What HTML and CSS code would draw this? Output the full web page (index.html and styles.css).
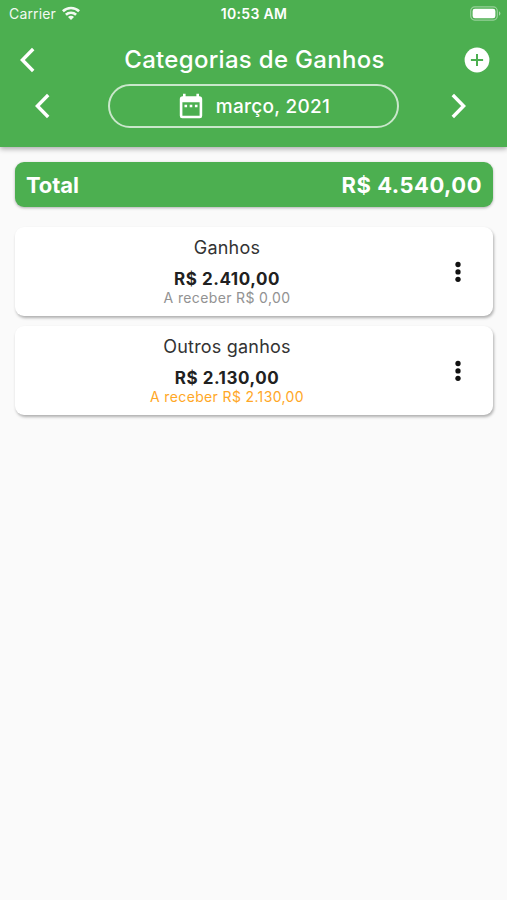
FILE: index.html
```html
<!DOCTYPE html>
<html lang="pt-BR">
<head>
<meta charset="utf-8">
<title>Categorias de Ganhos</title>
<link rel="stylesheet" href="styles.css">
</head>
<body>
<header class="header">
  <div class="status">
    <div class="carrier"><span>Carrier</span>
      <svg class="wifi" viewBox="0 0 18 14" width="18" height="14"><g fill="none" stroke="#fff" stroke-width="2.6"><path d="M.9 5.300a11.700 11.700 0 0 1 16.200 0"/><path d="M3.900 8.800a7.300 7.300 0 0 1 10.200 0"/></g><path d="M9 13.900 6 10.900a4.200 4.200 0 0 1 6 0z" fill="#fff"/></svg>
    </div>
    <span class="clock">10:53 AM</span>
    <svg class="battery" width="31" height="16" viewBox="0 0 31 16"><rect x=".7" y=".9" width="26.6" height="13.2" rx="4" fill="none" stroke="#fff" stroke-opacity=".42" stroke-width="1.2"/><rect x="2.6" y="2.7" width="22.8" height="9.6" rx="2.3" fill="#fff"/><path d="M29 5.3v4.4q1.4-.8 1.4-2.2T29 5.3z" fill="#fff" fill-opacity=".5"/></svg>
  </div>
  <div class="nav">
    <svg class="chevron" width="16" height="26" viewBox="0 0 16 26"><path d="M13.2 2 2.4 13l10.8 11" /></svg>
    <h1 class="title">Categorias de Ganhos</h1>
    <svg class="add" width="26" height="26" viewBox="0 0 26 26"><circle cx="13" cy="13" r="12.4" fill="#fff"/><path d="M13 6.9v12.2M6.9 13h12.2" stroke="#4caf50" stroke-width="2"/></svg>
  </div>
  <div class="period">
    <svg class="chevron" width="16" height="26" viewBox="0 0 16 26"><path d="M13.2 2 2.4 13l10.8 11" /></svg>
    <div class="month">
      <svg class="calendar" width="24" height="26" viewBox="0 0 24 26"><path fill="#fff" fill-rule="evenodd" d="M4 .8h2.600v2.400h10.800V.8H20v2.400h.8q2.400 0 2.400 2.500v17q0 2.500-2.400 2.500H3.200Q.8 25.200.8 22.700V5.700Q.8 3.200 3.200 3.200H4zM3.400 9.200v13.500h17.200V9.200z"/><path fill="#fff" d="M5.500 11.700h2.600v2.600H5.500zM10.700 11.700h2.600v2.600h-2.600zM15.900 11.700h2.600v2.600h-2.600z"/></svg>
      <span>março, 2021</span>
    </div>
    <svg class="chevron" width="16" height="26" viewBox="0 0 16 26"><path d="m2.800 2 10.800 11L2.800 24" /></svg>
  </div>
</header>
<main class="content">
  <section class="total"><span class="total-label">Total</span><span class="total-value">R$ 4.540,00</span></section>
  <article class="card">
    <div class="details">
      <h2 class="name">Ganhos</h2>
      <div class="amount">R$ 2.410,00</div>
      <div class="pending">A receber R$ 0,00</div>
    </div>
    <svg class="more" width="8" height="22" viewBox="0 0 8 22"><circle cx="4" cy="3.500" r="2.650"/><circle cx="4" cy="10.900" r="2.650"/><circle cx="4" cy="18.300" r="2.650"/></svg>
  </article>
  <article class="card">
    <div class="details">
      <h2 class="name">Outros ganhos</h2>
      <div class="amount">R$ 2.130,00</div>
      <div class="pending due">A receber R$ 2.130,00</div>
    </div>
    <svg class="more" width="8" height="22" viewBox="0 0 8 22"><circle cx="4" cy="3.500" r="2.650"/><circle cx="4" cy="10.900" r="2.650"/><circle cx="4" cy="18.300" r="2.650"/></svg>
  </article>
</main>
</body>
</html>
```
FILE: styles.css
```css
* { box-sizing: border-box; }
body {
  margin: 0;
  min-height: 900px;
  background: #fafafa;
  font-family: Inter, "Liberation Sans", sans-serif;
  color: #212121;
}
svg { display: block; flex: none; }
h1, h2 { margin: 0; }
.header {
  height: 147px;
  background: #4caf50;
  color: #fff;
  box-shadow: 0 2px 5px rgba(0, 0, 0, .32);
}
.status {
  display: grid;
  grid-template-columns: 1fr auto 1fr;
  align-items: center;
  height: 28px;
  padding: 0 6px 0 9px;
  font-size: 14px;
  line-height: 28px;
}
.carrier { display: flex; align-items: center; gap: 6px; opacity: .93; letter-spacing: .15px; }
.wifi { margin-top: -2px; }
.clock { margin-left: -2px; font-weight: 600; font-size: 14px; letter-spacing: .3px; }
.battery { justify-self: end; margin-top: -1px; }
.nav {
  display: grid;
  grid-template-columns: 1fr auto 1fr;
  align-items: center;
  height: 56px;
  padding: 7px 17px 0 20px;
}
.chevron { fill: none; stroke: #fff; stroke-width: 3.4; }
.title { font-size: 24px; font-weight: 500; line-height: 30px; letter-spacing: .3px; margin-left: -1px; }
.add { justify-self: end; }
.period {
  display: flex;
  align-items: center;
  justify-content: space-between;
  height: 44px;
  padding: 0 41px 0 35px;
}
.month {
  display: flex;
  align-items: center;
  justify-content: center;
  gap: 13px;
  width: 291px;
  height: 44px;
  margin-left: 5px;
  padding-left: 3px;
  border: 2px solid rgba(255, 255, 255, .7);
  border-radius: 22px;
  font-size: 19px;
  font-weight: 500;
  letter-spacing: .3px;
}
.content { padding: 15px 14px 0 15px; }
.total {
  display: flex;
  align-items: center;
  justify-content: space-between;
  height: 45px;
  margin-bottom: 20px;
  padding: 0 11px;
  border-radius: 9px;
  background: #4caf50;
  color: #fff;
  font-size: 22px;
  font-weight: 700;
  box-shadow: 0 1px 3px rgba(0, 0, 0, .3);
}
.total-label { letter-spacing: -.1px; }
.total-value { letter-spacing: .5px; }
.card {
  display: flex;
  height: 89px;
  margin-bottom: 10px;
  padding-top: 9px;
  border-radius: 9px;
  background: #fff;
  box-shadow: 1px 2px 3px rgba(0, 0, 0, .3);
}
.details { width: 424px; text-align: center; }
.name { font-size: 18px; font-weight: 400; line-height: 24px; letter-spacing: .2px; color: #333; }
.amount { margin-top: 8px; font-size: 17px; font-weight: 700; line-height: 22px; letter-spacing: .55px; }
.pending { margin-top: -1px; font-size: 14px; line-height: 17px; letter-spacing: .36px; color: #929292; }
.due { color: #ffa726; }
.more { margin: 25px 0 0 15px; fill: #111; }
```
